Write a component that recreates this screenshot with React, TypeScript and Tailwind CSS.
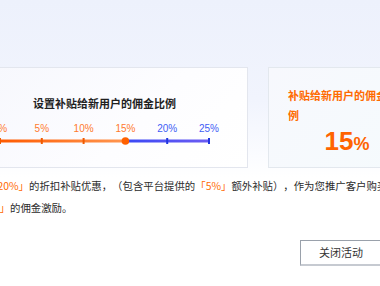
import React from "react";

const cjk = { fontFamily: '"Noto Sans CJK SC", "Noto Sans", sans-serif' };
const latin = { fontFamily: '"Liberation Sans", Arial, "Noto Sans CJK SC", sans-serif' };

const labels = [
  { t: "0%", c: "text-[#ff7a2e]" },
  { t: "5%", c: "text-[#ff7a2e]" },
  { t: "10%", c: "text-[#ff7a2e]" },
  { t: "15%", c: "text-[#ff7a2e]" },
  { t: "20%", c: "text-[#3f5df5]" },
  { t: "25%", c: "text-[#3f5df5]" },
];

function Track() {
  const w = 211;
  const xs = [0, 1, 2, 3, 4, 5].map((i) => 1 + (i * (w - 2)) / 5);
  return (
    <svg width={w} height={10} viewBox={`0 0 ${w} 10`} className="block overflow-visible">
      <defs>
        <linearGradient id="og" x1="0" x2="1" y1="0" y2="0">
          <stop offset="0" stopColor="#ff5a00" />
          <stop offset="1" stopColor="#ff9650" />
        </linearGradient>
        <linearGradient id="bg" x1="0" x2="1" y1="0" y2="0">
          <stop offset="0" stopColor="#3a48f5" />
          <stop offset="1" stopColor="#6c5cf2" />
        </linearGradient>
      </defs>
      <rect x={0} y={3.5} width={xs[3]} height={3} fill="url(#og)" />
      <rect x={xs[3]} y={3.5} width={w - xs[3]} height={3} fill="url(#bg)" />
      {xs.map((x, i) =>
        i === 3 ? null : (
          <rect key={i} x={x - 1} y={2} width={2} height={6} fill={i < 3 ? "#f05a00" : "#2036e0"} />
        )
      )}
      <circle cx={xs[3]} cy={5} r={3.8} fill="#ff6000" />
    </svg>
  );
}

export default function App() {
  return (
    <div
      className="w-[380px] h-[286px] overflow-hidden bg-[linear-gradient(180deg,#edf1fc_0%,#f1f4fd_35%,#fbfcff_55%,#ffffff_62%)] [text-spacing-trim:space-all]"
      style={cjk}
    >
      <div className="ml-[-39px] w-[465px] pt-[67px]">
        <div className="flex gap-[20px]">
          <div className="w-[287px] h-[101px] shrink-0 border border-[#e3e6ee] bg-[linear-gradient(135deg,#f6f7fd_0%,#fdfdff_60%,#ffffff_100%)] flex flex-col items-center pt-[28px]">
            <div className="text-[11px] leading-[14px] font-bold text-[#1f1f1f] whitespace-nowrap">
              设置补贴给新用户的佣金比例
            </div>
            <div className="w-[211px] mt-[13px] flex justify-between px-[1px]">
              {labels.map((l) => (
                <div key={l.t} className="w-0 flex justify-center">
                  <span className={`text-[10px] leading-[12px] whitespace-nowrap ${l.c}`} style={latin}>
                    {l.t}
                  </span>
                </div>
              ))}
            </div>
            <div className="mt-[1px]">
              <Track />
            </div>
          </div>
          <div className="w-[158px] h-[101px] shrink-0 border border-[#e3e8ee] bg-[linear-gradient(135deg,#f7f8fd_0%,#f5fbfd_100%)] px-[19px] pt-[17px]">
            <div className="text-[11px] leading-[20px] font-semibold text-[#ff6a00]">
              补贴给新用户的佣金比例
            </div>
            <div className="mt-[3px] flex items-baseline justify-center text-[#ff6400] font-bold leading-none" style={latin}>
              <span className="text-[26px] leading-none">15</span>
              <span className="text-[18px] leading-none">%</span>
            </div>
          </div>
        </div>

        <div className="mt-[7px] text-[10.4px] leading-[22px] text-[#2b2b2b] whitespace-nowrap">
          <div className="flex">
            <div className="w-[68px] shrink-0 flex justify-end">
              <span className="whitespace-nowrap">
                新用户享<span className="text-[#ff6a00]">「20%」</span>
              </span>
            </div>
            <span>
              的折扣补贴优惠，（包含平台提供的<span className="text-[#ff6a00]">「5%」</span>额外补贴），作为您推广客户购买商品的回报
            </span>
          </div>
          <div className="flex">
            <div className="w-[49px] shrink-0 flex justify-end">
              <span className="whitespace-nowrap">
                给予您<span className="text-[#ff6a00]">「15%」</span>
              </span>
            </div>
            <span>的佣金激励。</span>
          </div>
        </div>

        <div className="mt-[21px] flex justify-end pr-[44px]">
          <button className="w-[82px] h-[26px] border border-[#9aa1ab] border-b-[2px] border-b-[#c6cad1] bg-white text-[11px] text-[#333] leading-none">
            关闭活动
          </button>
        </div>
      </div>
    </div>
  );
}
